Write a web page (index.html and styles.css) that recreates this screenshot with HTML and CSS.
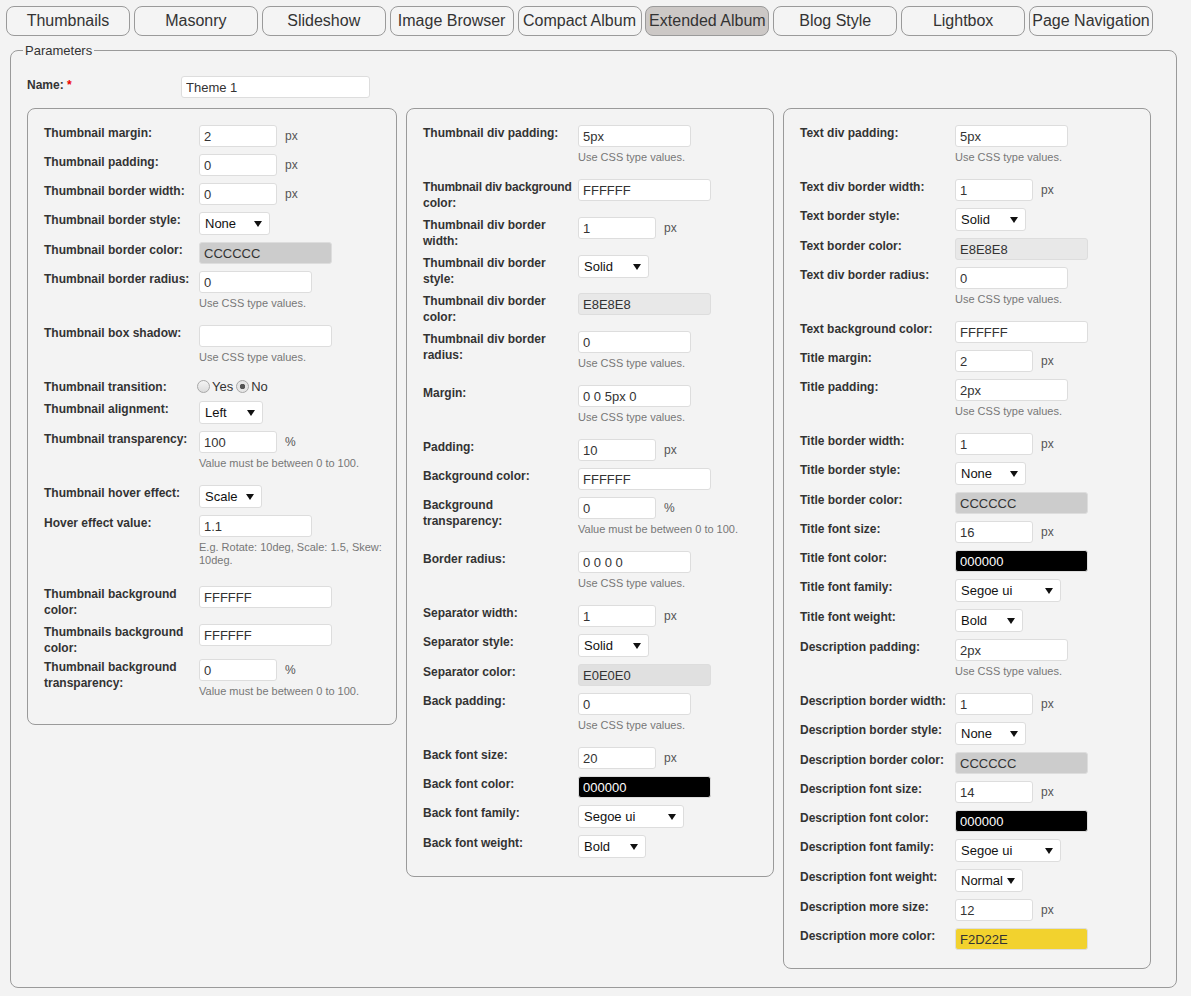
FILE: index.html
```html
<!DOCTYPE html>
<html lang="en">
<head>
    <meta charset="UTF-8">
    <title>Theme - Extended Album</title>
    <link rel="stylesheet" href="styles.css">
</head>
<body>

    <!-- View tabs -->
    <div class="tabs">
        <button class="tab">Thumbnails</button>
        <button class="tab">Masonry</button>
        <button class="tab">Slideshow</button>
        <button class="tab">Image Browser</button>
        <button class="tab">Compact Album</button>
        <button class="tab active">Extended Album</button>
        <button class="tab">Blog Style</button>
        <button class="tab">Lightbox</button>
        <button class="tab">Page Navigation</button>
    </div>

    <fieldset class="params">
        <legend>Parameters</legend>

        <div class="name-row">
            <label class="name-label">Name: <span class="req">*</span></label>
            <input type="text" class="field name-field" value="Theme 1">
        </div>

        <div class="boxes">

            <!-- Thumbnail options -->
            <div class="box box-wide">
                <table class="opts">
                    <tr><td class="lbl">Thumbnail margin:</td><td><input class="field sm" value="2"><span class="unit">px</span></td></tr>
                    <tr><td class="lbl">Thumbnail padding:</td><td><input class="field sm" value="0"><span class="unit">px</span></td></tr>
                    <tr><td class="lbl">Thumbnail border width:</td><td><input class="field sm" value="0"><span class="unit">px</span></td></tr>
                    <tr><td class="lbl">Thumbnail border style:</td><td><span class="sel w71"><select><option>None</option></select></span></td></tr>
                    <tr><td class="lbl">Thumbnail border color:</td><td><input class="field lg" style="background:#cccccc" value="CCCCCC"></td></tr>
                    <tr><td class="lbl">Thumbnail border radius:</td><td><input class="field md" value="0"><p class="desc">Use CSS type values.</p></td></tr>
                    <tr><td class="lbl">Thumbnail box shadow:</td><td><input class="field lg" value=""><p class="desc">Use CSS type values.</p></td></tr>
                    <tr><td class="lbl">Thumbnail transition:</td><td class="radios"><div class="radio-group"><label><input type="radio" name="tr">Yes</label><label><input type="radio" name="tr" checked>No</label></div></td></tr>
                    <tr><td class="lbl">Thumbnail alignment:</td><td><span class="sel w64"><select><option>Left</option></select></span></td></tr>
                    <tr><td class="lbl">Thumbnail transparency:</td><td><input class="field sm" value="100"><span class="unit">%</span><p class="desc">Value must be between 0 to 100.</p></td></tr>
                    <tr><td class="lbl">Thumbnail hover effect:</td><td><span class="sel w63"><select><option>Scale</option></select></span></td></tr>
                    <tr><td class="lbl">Hover effect value:</td><td><input class="field md" value="1.1"><p class="desc narrow">E.g. Rotate: 10deg, Scale: 1.5, Skew: 10deg.</p></td></tr>
                    <tr><td class="lbl">Thumbnail background color:</td><td><input class="field lg" value="FFFFFF"></td></tr>
                    <tr class="tight"><td class="lbl">Thumbnails background color:</td><td><input class="field lg" value="FFFFFF"></td></tr>
                    <tr><td class="lbl">Thumbnail background transparency:</td><td><input class="field sm" value="0"><span class="unit">%</span><p class="desc">Value must be between 0 to 100.</p></td></tr>
                </table>
            </div>

            <!-- Album container options -->
            <div class="box">
                <table class="opts">
                    <tr><td class="lbl">Thumbnail div padding:</td><td><input class="field md" value="5px"><p class="desc">Use CSS type values.</p></td></tr>
                    <tr><td class="lbl"><span class="squeeze">Thumbnail&nbsp;div&nbsp;background</span> color:</td><td><input class="field lg" value="FFFFFF"></td></tr>
                    <tr><td class="lbl">Thumbnail div border width:</td><td><input class="field sm" value="1"><span class="unit">px</span></td></tr>
                    <tr><td class="lbl">Thumbnail div border style:</td><td><span class="sel w71"><select><option>Solid</option></select></span></td></tr>
                    <tr><td class="lbl">Thumbnail div border color:</td><td><input class="field lg" style="background:#e8e8e8" value="E8E8E8"></td></tr>
                    <tr><td class="lbl">Thumbnail div border radius:</td><td><input class="field md" value="0"><p class="desc">Use CSS type values.</p></td></tr>
                    <tr><td class="lbl">Margin:</td><td><input class="field md" value="0 0 5px 0"><p class="desc">Use CSS type values.</p></td></tr>
                    <tr><td class="lbl">Padding:</td><td><input class="field sm" value="10"><span class="unit">px</span></td></tr>
                    <tr><td class="lbl">Background color:</td><td><input class="field lg" value="FFFFFF"></td></tr>
                    <tr><td class="lbl">Background transparency:</td><td><input class="field sm" value="0"><span class="unit">%</span><p class="desc">Value must be between 0 to 100.</p></td></tr>
                    <tr><td class="lbl">Border radius:</td><td><input class="field md" value="0 0 0 0"><p class="desc">Use CSS type values.</p></td></tr>
                    <tr><td class="lbl">Separator width:</td><td><input class="field sm" value="1"><span class="unit">px</span></td></tr>
                    <tr><td class="lbl">Separator style:</td><td><span class="sel w71"><select><option>Solid</option></select></span></td></tr>
                    <tr><td class="lbl">Separator color:</td><td><input class="field lg" style="background:#e0e0e0" value="E0E0E0"></td></tr>
                    <tr><td class="lbl">Back padding:</td><td><input class="field md" value="0"><p class="desc">Use CSS type values.</p></td></tr>
                    <tr><td class="lbl">Back font size:</td><td><input class="field sm" value="20"><span class="unit">px</span></td></tr>
                    <tr><td class="lbl">Back font color:</td><td><input class="field lg dark" value="000000"></td></tr>
                    <tr><td class="lbl">Back font family:</td><td><span class="sel w106"><select><option>Segoe ui</option></select></span></td></tr>
                    <tr><td class="lbl">Back font weight:</td><td><span class="sel w68"><select><option>Bold</option></select></span></td></tr>
                </table>
            </div>

            <!-- Text / title / description options -->
            <div class="box">
                <table class="opts">
                    <tr><td class="lbl">Text div padding:</td><td><input class="field md" value="5px"><p class="desc">Use CSS type values.</p></td></tr>
                    <tr><td class="lbl">Text div border width:</td><td><input class="field sm" value="1"><span class="unit">px</span></td></tr>
                    <tr><td class="lbl">Text border style:</td><td><span class="sel w71"><select><option>Solid</option></select></span></td></tr>
                    <tr><td class="lbl">Text border color:</td><td><input class="field lg" style="background:#e8e8e8" value="E8E8E8"></td></tr>
                    <tr><td class="lbl">Text div border radius:</td><td><input class="field md" value="0"><p class="desc">Use CSS type values.</p></td></tr>
                    <tr><td class="lbl">Text background color:</td><td><input class="field lg" value="FFFFFF"></td></tr>
                    <tr><td class="lbl">Title margin:</td><td><input class="field sm" value="2"><span class="unit">px</span></td></tr>
                    <tr><td class="lbl">Title padding:</td><td><input class="field md" value="2px"><p class="desc">Use CSS type values.</p></td></tr>
                    <tr><td class="lbl">Title border width:</td><td><input class="field sm" value="1"><span class="unit">px</span></td></tr>
                    <tr><td class="lbl">Title border style:</td><td><span class="sel w71"><select><option>None</option></select></span></td></tr>
                    <tr><td class="lbl">Title border color:</td><td><input class="field lg" style="background:#cccccc" value="CCCCCC"></td></tr>
                    <tr><td class="lbl">Title font size:</td><td><input class="field sm" value="16"><span class="unit">px</span></td></tr>
                    <tr><td class="lbl">Title font color:</td><td><input class="field lg dark" value="000000"></td></tr>
                    <tr><td class="lbl">Title font family:</td><td><span class="sel w106"><select><option>Segoe ui</option></select></span></td></tr>
                    <tr><td class="lbl">Title font weight:</td><td><span class="sel w68"><select><option>Bold</option></select></span></td></tr>
                    <tr><td class="lbl">Description padding:</td><td><input class="field md" value="2px"><p class="desc">Use CSS type values.</p></td></tr>
                    <tr><td class="lbl">Description border width:</td><td><input class="field sm" value="1"><span class="unit">px</span></td></tr>
                    <tr><td class="lbl">Description border style:</td><td><span class="sel w71"><select><option>None</option></select></span></td></tr>
                    <tr><td class="lbl">Description border color:</td><td><input class="field lg" style="background:#cccccc" value="CCCCCC"></td></tr>
                    <tr><td class="lbl">Description font size:</td><td><input class="field sm" value="14"><span class="unit">px</span></td></tr>
                    <tr><td class="lbl">Description font color:</td><td><input class="field lg dark" value="000000"></td></tr>
                    <tr><td class="lbl">Description font family:</td><td><span class="sel w106"><select><option>Segoe ui</option></select></span></td></tr>
                    <tr><td class="lbl">Description font weight:</td><td><span class="sel w68"><select><option>Normal</option></select></span></td></tr>
                    <tr><td class="lbl">Description more size:</td><td><input class="field sm" value="12"><span class="unit">px</span></td></tr>
                    <tr><td class="lbl">Description more color:</td><td><input class="field lg" style="background:#f2d22e" value="F2D22E"></td></tr>
                </table>
            </div>

        </div>
    </fieldset>

</body>
</html>
```

FILE: styles.css
```css
body {
    font-family: "Liberation Sans", Arial, sans-serif;
    margin: 0;
    padding: 6px 14px 0 6px;
    background: #f3f3f3;
    color: #333;
}

/* tabs */
.tabs {
    display: flex;
    gap: 3.88px;
}

.tab {
    box-sizing: border-box;
    width: 124px;
    height: 30px;
    margin: 0;
    padding: 0;
    font-family: inherit;
    font-size: 16px;
    color: #333;
    background: #f4f4f4;
    border: 1px solid #9a9a9a;
    border-radius: 8px;
    white-space: nowrap;
    cursor: pointer;
}

.tab.active {
    background: #ccc8c6;
}

/* parameters fieldset */
.params {
    margin: 7px 0 0 4px;
    padding: 0 16px 18px;
    border: 1px solid #9a9a9a;
    border-radius: 8px;
}

.params legend {
    margin-left: -4px;
    padding: 0 2px;
    font-size: 13px;
    color: #333;
}

.name-row {
    display: flex;
    align-items: flex-start;
    margin-top: 18px;
}

.name-label {
    width: 154px;
    padding-top: 2px;
    font-size: 12px;
    font-weight: bold;
    color: #333;
}

.req {
    color: #e00;
}

.name-field {
    width: 189px;
}

.boxes {
    display: flex;
    align-items: flex-start;
    gap: 9px;
    margin-top: 10px;
}

.box {
    width: 368px;
    box-sizing: border-box;
    padding: 13px 16px 14px;
    border: 1px solid #9a9a9a;
    border-radius: 8px;
}

.box-wide {
    width: 370px;
}

/* option table */
.opts {
    width: 100%;
    table-layout: fixed;
    border-collapse: collapse;
}

.opts td {
    padding: 3px 0 4px;
    vertical-align: top;
    font-size: 12px;
}

.opts td.lbl {
    width: 150px;
    padding: 3px 5px 3px 0;
    font-weight: bold;
    line-height: 16px;
    color: #333;
}

.opts tr.tight td.lbl {
    padding-bottom: 0;
}

.squeeze {
    letter-spacing: -0.2px;
}

.field {
    box-sizing: border-box;
    height: 22px;
    padding: 0 4px;
    font-family: inherit;
    font-size: 13px;
    color: #333;
    background: #fff;
    border: 1px solid #ddd;
    border-radius: 3px;
    vertical-align: top;
}

.field.sm { width: 78px; }
.field.md { width: 113px; }
.field.lg { width: 133px; }

.field.dark {
    background: #000;
    color: #fff;
}

.unit {
    display: inline-block;
    margin-left: 8px;
    line-height: 22px;
    font-size: 12px;
    color: #555;
}

.desc {
    margin: 4px 0 8px;
    font-size: 11px;
    line-height: 13px;
    color: #777;
}

.desc.narrow {
    width: 186px;
    margin-bottom: 12px;
}

/* radio pair */
.opts td.radios {
    padding-bottom: 3px;
    font-size: 13px;
    color: #333;
}

.radio-group {
    display: flex;
    align-items: center;
    gap: 3px;
    height: 15px;
    margin-left: -2px;
}

.radio-group label {
    display: flex;
    align-items: center;
    gap: 2px;
}

.radio-group input {
    -webkit-appearance: none;
    appearance: none;
    box-sizing: border-box;
    width: 13px;
    height: 13px;
    margin: 0;
    border: 1px solid #a8a8a8;
    border-radius: 50%;
    background: linear-gradient(#f4f4f4, #dcdcdc);
}

.radio-group input:checked {
    background: radial-gradient(circle, #555 0 2.5px, #e6e6e6 3px);
}

/* select with custom arrow */
.sel {
    position: relative;
    display: inline-block;
}

.sel select {
    -webkit-appearance: none;
    appearance: none;
    box-sizing: border-box;
    width: 100%;
    height: 23px;
    padding: 0 16px 0 5px;
    font-family: inherit;
    font-size: 13px;
    color: #111;
    background: #fff;
    border: 1px solid #ddd;
    border-radius: 3px;
}

.sel::after {
    content: "";
    position: absolute;
    right: 8px;
    top: 9px;
    border-left: 4px solid transparent;
    border-right: 4px solid transparent;
    border-top: 6px solid #111;
    pointer-events: none;
}

.w63 { width: 63px; }
.w64 { width: 64px; }
.w68 { width: 68px; }
.w71 { width: 71px; }
.w106 { width: 106px; }
```
